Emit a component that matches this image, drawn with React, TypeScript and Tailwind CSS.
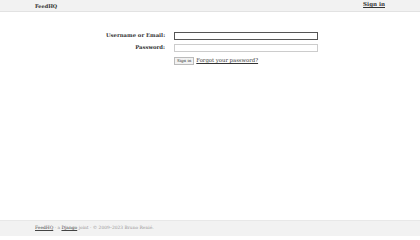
export default function App() {
  return (
    <div className="flex min-h-[236px] flex-col bg-white font-['DejaVu_Serif',serif] text-[#333]">
      <header className="border-b border-[#e2e2e2] bg-[#f2f2f2]">
        <div className="mx-auto flex h-[11px] w-[350px] items-start justify-between">
          <span className="mt-[3px] text-[5px] leading-[6px] font-bold text-[#333]">FeedHQ</span>
          <a href="#" className="mt-[1px] text-[5.5px] leading-[6px] font-bold text-[#333] underline">
            Sign in
          </a>
        </div>
      </header>

      <main className="flex flex-1 justify-center pt-[20px] pl-[4px]">
        <form className="flex flex-col gap-[4px]">
          <div className="flex items-center gap-[9px]">
            <label className="w-[59px] text-right text-[5.3px] font-bold whitespace-nowrap text-[#333]">Username or Email:</label>
            <input className="h-[8px] w-[144px] border border-[#555] bg-white" />
          </div>
          <div className="flex items-center gap-[9px]">
            <label className="w-[59px] text-right text-[5.3px] font-bold text-[#333]">Password:</label>
            <input type="password" className="h-[8px] w-[144px] border border-[#ccc] bg-white" />
          </div>
          <div className="mt-[1px] flex items-center gap-[2px] pl-[68px]">
            <button className="h-[8px] border border-[#bbb] bg-[#f2f2f2] px-[2px] text-[4px] leading-none text-[#333]">Sign in</button>
            <a href="#" className="text-[5.3px] text-[#333] underline">
              Forgot your password?
            </a>
          </div>
        </form>
      </main>

      <footer className="border-t border-[#e8e8e8] bg-[#f2f2f2]">
        <div className="mx-auto flex h-[15px] w-[350px] items-center text-[4.4px] text-[#999]">
          <a href="#" className="text-[#444] underline">FeedHQ</a>
          <span>&nbsp;· a&nbsp;</span>
          <a href="#" className="text-[#444] underline">Django</a>
          <span>&nbsp;joint · © 2009–2023 Bruno Renié.</span>
        </div>
      </footer>
    </div>
  );
}
